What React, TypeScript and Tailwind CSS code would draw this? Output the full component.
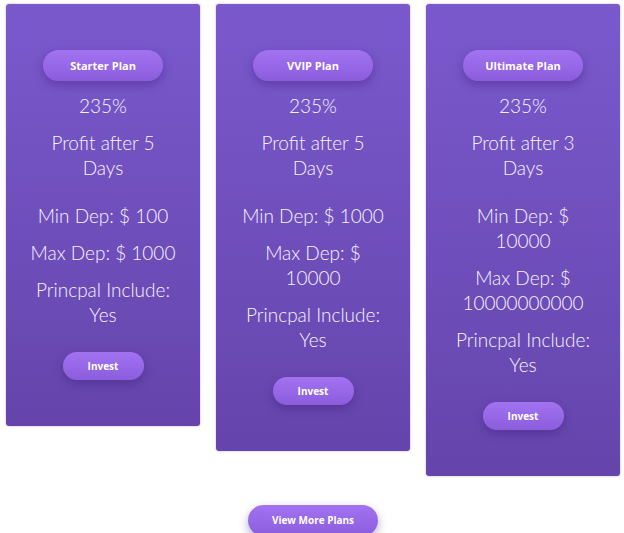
import React from 'react';

type Plan = {
  name: string;
  profit: React.ReactNode;
  min: React.ReactNode;
  max: React.ReactNode;
};

const plans: Plan[] = [
  { name: 'Starter Plan', profit: <>Profit after 5<br />Days</>, min: 'Min Dep: $ 100', max: 'Max Dep: $ 1000' },
  { name: 'VVIP Plan', profit: <>Profit after 5<br />Days</>, min: 'Min Dep: $ 1000', max: <>Max Dep: $<br />10000</> },
  { name: 'Ultimate Plan', profit: <>Profit after 3<br />Days</>, min: <>Min Dep: $<br />10000</>, max: <>Max Dep: $<br />10000000000</> },
];

const btnFont = { fontFamily: '"Open Sans", "Liberation Sans", sans-serif' };

function PlanCard({ plan }: { plan: Plan }) {
  return (
    <div className="w-[194px] rounded-[3px] bg-gradient-to-b from-[#7a59cd] to-[#6545ab] pt-[46px] pb-[46px] px-2 flex flex-col items-center text-center text-[19px] font-light leading-[25px] text-[#f7f4ff] shadow-[0_0_2px_rgba(120,90,210,0.6)]">
      <button
        style={btnFont}
        className="h-[31px] w-[120px] rounded-full bg-gradient-to-b from-[#a272f1] to-[#8b5ddc] text-[11px] font-bold text-white shadow-[0_4px_10px_rgba(50,20,110,0.35)]">
        {plan.name}
      </button>
      <p className="mt-[12px]">235%</p>
      <p className="mt-[12px]">{plan.profit}</p>
      <p className="mt-[23px]">{plan.min}</p>
      <p className="mt-[12px]">{plan.max}</p>
      <p className="mt-[12px]">Princpal Include:<br />Yes</p>
      <button
        style={btnFont}
        className="mt-[25px] h-[28px] w-[81px] rounded-full bg-gradient-to-b from-[#a272f1] to-[#8b5ddc] text-[10px] font-bold text-white shadow-[0_4px_10px_rgba(50,20,110,0.35)]">
        Invest
      </button>
    </div>
  );
}

export default function App() {
  return (
    <main className="min-h-screen bg-white pt-1 pl-[2px]" style={{ fontFamily: 'Lato, "Open Sans", sans-serif' }}>
      <div className="flex items-start justify-center gap-4">
        {plans.map((p) => (
          <PlanCard key={p.name} plan={p} />
        ))}
      </div>
      <div className="mt-[29px] flex justify-center">
        <button
          style={btnFont}
          className="h-[31px] w-[130px] rounded-full bg-gradient-to-b from-[#a272f1] to-[#8b5ddc] text-[10px] font-bold text-white shadow-[0_4px_10px_rgba(50,20,110,0.35)]">
          View More Plans
        </button>
      </div>
    </main>
  );
}
